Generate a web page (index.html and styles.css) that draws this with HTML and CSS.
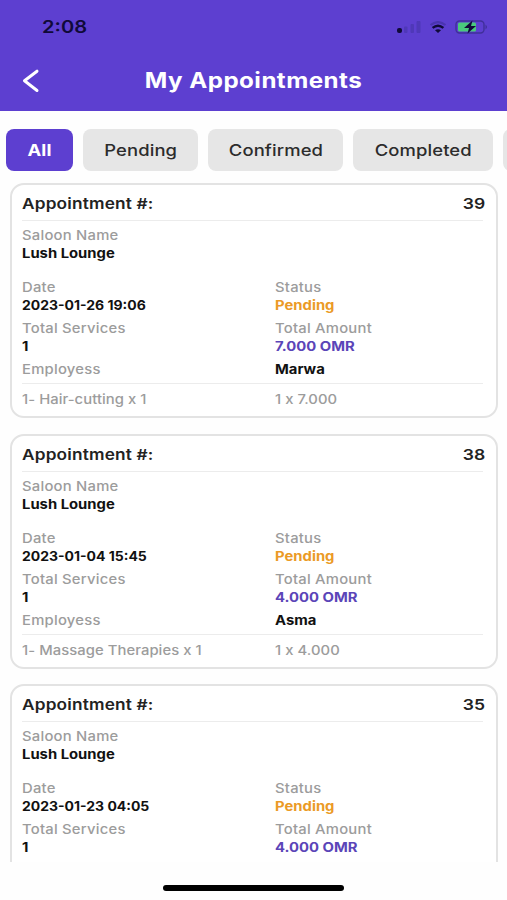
FILE: index.html
```html
<!DOCTYPE html>
<html lang="en">
<head>
  <meta charset="UTF-8">
  <meta name="viewport" content="width=device-width, initial-scale=1.0">
  <title>My Appointments</title>
  <link rel="stylesheet" href="styles.css">
</head>
<body>
  <header class="header">
    <div class="status-bar">
      <span class="clock">2:08</span>
      <div class="status-icons">
        <svg width="24" height="12" viewBox="0 0 24 12">
          <rect x="0" y="7" width="5" height="5" rx="2" fill="#100a38"/>
          <g fill="#4f38b8">
            <rect x="7" y="5.5" width="3.5" height="6.5" rx="1"/>
            <rect x="13.5" y="3" width="3.5" height="9" rx="1"/>
            <rect x="19.5" y="0" width="4" height="12" rx="1"/>
          </g>
        </svg>
        <svg class="wifi" width="18" height="12" viewBox="0 0 18 12" fill="none">
          <path d="M1.5 4Q9 -1.8 16.5 4" stroke="#4a34b0" stroke-width="2.2"/>
          <path d="M3.6 6.9Q9 2.4 14.4 6.9" stroke="#100a38" stroke-width="2.4"/>
          <path d="M6 9.2Q9 7.2 12 9.2L9 12Z" fill="#100a38"/>
        </svg>
        <svg class="battery" width="34" height="14" viewBox="0 0 34 14">
          <rect x="1" y="1" width="28" height="12" rx="3.5" fill="none" stroke="#40309a" stroke-width="1.4"/>
          <path d="M30.5 4.5Q33.5 7 30.5 9.5Z" fill="#40309a"/>
          <rect x="3" y="2.6" width="18" height="8.8" rx="1.5" fill="#4ac97c"/>
          <path d="M17.5 0.5L9 8H14L12.5 13.5L21 6H16Z" fill="#100a38"/>
        </svg>
      </div>
    </div>
    <div class="title-bar">
      <svg class="back" width="18" height="24" viewBox="0 0 18 24">
        <path d="M15 2.2L2.5 11.8L15 21.5" fill="none" stroke="#fff" stroke-width="3" stroke-linecap="round" stroke-linejoin="round"/>
      </svg>
      <h1 class="title">My Appointments</h1>
    </div>
  </header>

  <nav class="tabs">
    <a class="tab tab-all active"><span>All</span></a>
    <a class="tab tab-pending"><span>Pending</span></a>
    <a class="tab tab-confirmed"><span>Confirmed</span></a>
    <a class="tab tab-completed"><span>Completed</span></a>
    <a class="tab"></a>
  </nav>

  <main class="list">
    <article class="card">
      <div class="card-head"><span class="heading">Appointment #:</span><span class="number">39</span></div>
      <div class="row saloon">
        <div><p class="label">Saloon Name</p><p class="value">Lush Lounge</p></div>
      </div>
      <div class="row">
        <div><p class="label">Date</p><p class="value date">2023-01-26 19:06</p></div>
        <div><p class="label">Status</p><p class="value pending">Pending</p></div>
      </div>
      <div class="row">
        <div><p class="label">Total Services</p><p class="value">1</p></div>
        <div><p class="label">Total Amount</p><p class="value amount">7.000 OMR</p></div>
      </div>
      <div class="row">
        <p class="label">Employess</p>
        <p class="value">Marwa</p>
      </div>
      <div class="row service">
        <p class="label">1- Hair-cutting x 1</p>
        <p class="label">1 x 7.000</p>
      </div>
    </article>

    <article class="card">
      <div class="card-head"><span class="heading">Appointment #:</span><span class="number">38</span></div>
      <div class="row saloon">
        <div><p class="label">Saloon Name</p><p class="value">Lush Lounge</p></div>
      </div>
      <div class="row">
        <div><p class="label">Date</p><p class="value date">2023-01-04 15:45</p></div>
        <div><p class="label">Status</p><p class="value pending">Pending</p></div>
      </div>
      <div class="row">
        <div><p class="label">Total Services</p><p class="value">1</p></div>
        <div><p class="label">Total Amount</p><p class="value amount">4.000 OMR</p></div>
      </div>
      <div class="row">
        <p class="label">Employess</p>
        <p class="value">Asma</p>
      </div>
      <div class="row service">
        <p class="label">1- Massage Therapies x 1</p>
        <p class="label">1 x 4.000</p>
      </div>
    </article>

    <article class="card">
      <div class="card-head"><span class="heading">Appointment #:</span><span class="number">35</span></div>
      <div class="row saloon">
        <div><p class="label">Saloon Name</p><p class="value">Lush Lounge</p></div>
      </div>
      <div class="row">
        <div><p class="label">Date</p><p class="value date">2023-01-23 04:05</p></div>
        <div><p class="label">Status</p><p class="value pending">Pending</p></div>
      </div>
      <div class="row">
        <div><p class="label">Total Services</p><p class="value">1</p></div>
        <div><p class="label">Total Amount</p><p class="value amount">4.000 OMR</p></div>
      </div>
    </article>
  </main>

  <footer class="home-area"><div class="home-indicator"></div></footer>
</body>
</html>
```
FILE: styles.css
```css
:root {
  --primary: #5d3fd0;
  --orange: #eb9a26;
  --gray: #9c9c9c;
  --line: #e3e3e3;
}

* {
  margin: 0;
  padding: 0;
  box-sizing: border-box;
}

body {
  width: 507px;
  height: 900px;
  overflow: hidden;
  display: flex;
  flex-direction: column;
  background: #fefefe;
  color: #111;
  font-family: Inter, sans-serif;
}

.header {
  height: 111px;
  flex: none;
  background: var(--primary);
  color: #fff;
}

.status-bar {
  height: 54px;
  display: flex;
  align-items: center;
  justify-content: space-between;
  padding: 0 18px 0 42px;
}

.clock {
  color: #100a38;
  font-size: 17px;
  font-weight: 600;
  transform: scaleX(1.18);
  transform-origin: left;
}

.status-icons {
  display: flex;
  align-items: center;
}

.wifi {
  margin-left: 8px;
}

.battery {
  margin-left: 8px;
}

.title-bar {
  height: 54px;
  display: flex;
  align-items: center;
  padding: 0 40px 0 22px;
}

.title {
  flex: 1;
  text-align: center;
  font-size: 21px;
  line-height: 28px;
  font-weight: 700;
  letter-spacing: 0.4px;
  transform: scaleX(1.15);
}

.tabs {
  display: flex;
  flex: none;
  gap: 10px;
  padding: 18px 0 0 6px;
  height: 72px;
  overflow: hidden;
}

.tab {
  flex: none;
  height: 42px;
  width: 115px;
  display: flex;
  align-items: center;
  justify-content: center;
  border-radius: 8px;
  background: #e6e6e6;
  color: #2c2c2c;
  font-size: 16px;
  font-weight: 500;
  letter-spacing: 0.1px;
}

.tab span {
  transform: scaleX(1.15);
}

.tab-all {
  width: 67px;
}

.tab-confirmed {
  width: 135px;
}

.tab-completed {
  width: 140px;
}

.active {
  background: var(--primary);
  color: #fff;
  font-weight: 700;
}

.list {
  height: 679px;
  flex: none;
  overflow: hidden;
  padding: 0 9px 0 10px;
}

.card {
  height: 235px;
  margin-bottom: 15.5px;
  padding: 0 13px 0 10px;
  border: 2.5px solid var(--line);
  border-radius: 14px;
  background: #fff;
}

.card-head {
  height: 36px;
  padding-top: 2px;
  display: flex;
  align-items: center;
  justify-content: space-between;
  border-bottom: 1px solid #ececec;
  color: #222;
  font-size: 15px;
  font-weight: 600;
}

.heading {
  letter-spacing: 0.15px;
  transform: scaleX(1.15);
  transform-origin: left;
}

.number {
  margin-right: -2px;
  transform: scaleX(1.17);
  transform-origin: right;
}

.row {
  display: grid;
  grid-template-columns: 253px 1fr;
  margin-bottom: 5px;
  line-height: 18px;
  font-size: 13px;
}

.saloon {
  padding-top: 5px;
  margin-bottom: 16px;
}

.label,
.value {
  transform: scaleX(1.14);
  transform-origin: left;
}

.label {
  color: var(--gray);
  font-weight: 500;
  letter-spacing: 0.2px;
}

.value {
  color: #111;
  font-weight: 700;
}

.value.date {
  transform: scaleX(1.075);
}

.value.pending {
  color: var(--orange);
}

.value.amount {
  color: #5b45b8;
}

.service {
  padding-top: 6px;
  border-top: 1px solid #ececec;
}

.service .label {
  letter-spacing: 0.05px;
}

.home-area {
  flex: 1;
  display: flex;
  justify-content: center;
  padding-top: 23px;
}

.home-indicator {
  width: 181px;
  height: 6px;
  border-radius: 3px;
  background: #000;
}
```
